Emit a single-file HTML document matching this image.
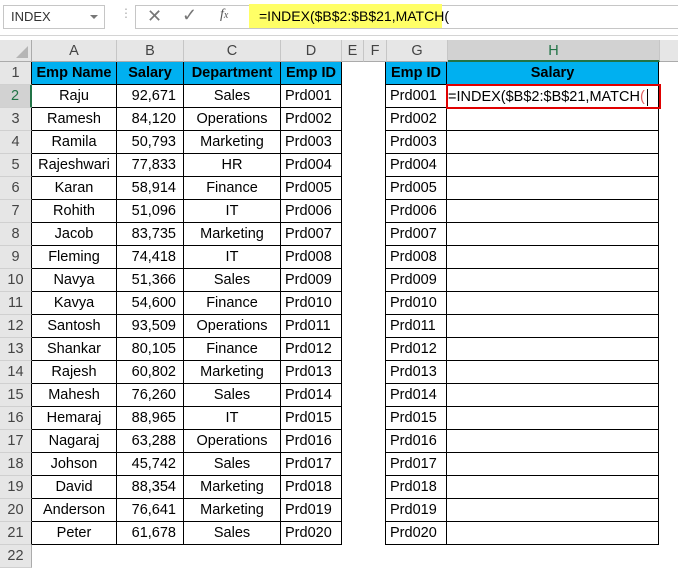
<!DOCTYPE html>
<html><head><meta charset="utf-8"><style>
*{box-sizing:border-box;margin:0;padding:0}
body{width:678px;height:568px;background:#fff;font-family:"Liberation Sans",sans-serif;position:relative;overflow:hidden}
.a{position:absolute}
.row{position:absolute;left:0;height:23px;display:flex;font-size:14.5px;color:#000}
.row>div{height:23px;line-height:23px;white-space:nowrap;overflow:visible}
.rh{width:32px;background:#e6e6e6;color:#444;text-align:center;border-right:1px solid #ababab;border-bottom:1px solid #d0d0d0}
.c{text-align:center}.r{text-align:right;padding-right:7px}.l{text-align:left;padding-left:4px}
.b{border-right:1px solid #000;border-bottom:1px solid #000}
.h{background:#00b0f0;font-weight:bold}
.sp{width:44px;border-right:1px solid #000}
</style></head><body>
<div class="a" style="left:0;top:0;width:678px;height:36px;background:#fff;border-bottom:1px solid #d4d4d4"></div>
<div class="a" style="left:3px;top:5px;width:102px;height:24px;border:1px solid #c6c6c6;font-size:13px;line-height:22px;padding-left:7px;color:#333">INDEX</div>
<div class="a" style="left:90px;top:15px;width:0;height:0;border-left:4px solid transparent;border-right:4px solid transparent;border-top:4px solid #777"></div>
<div class="a" style="left:120px;top:10px;color:#aaa;font-size:12px;line-height:6px">⋮</div>
<div class="a" style="left:135px;top:5px;width:118px;height:24px;border:1px solid #c6c6c6;border-right:none"></div>
<div class="a" style="left:147px;top:6px;color:#777;font-size:18px">✕</div>
<div class="a" style="left:182px;top:5px;color:#777;font-size:18px">✓</div>
<div class="a" style="left:220px;top:7px;color:#555;font-size:14px;font-style:italic;font-family:'Liberation Serif',serif">f<span style="font-size:10px">x</span></div>
<div class="a" style="left:248px;top:5px;width:430px;height:24px;border-top:1px solid #c6c6c6;border-bottom:1px solid #c6c6c6"></div>
<div class="a" style="left:249px;top:4px;width:193px;height:24px;background:#ffff66;font-size:14px;line-height:24px;padding-left:10px;white-space:nowrap">=INDEX($B$2:$B$21,MATCH(</div>
<div class="row" style="top:40px;height:22px;color:#444;font-size:14.5px">
<div style="width:32px;height:22px;background:#e6e6e6;border-right:1px solid #ababab;border-bottom:1px solid #ababab;position:relative"><div class="a" style="right:3px;bottom:3px;border-left:12px solid transparent;border-bottom:12px solid #b5b5b5"></div></div>
<div class="c" style="width:85px;height:22px;line-height:22px;background:#e6e6e6;border-right:1px solid #c6c6c6;border-bottom:1px solid #ababab">A</div>
<div class="c" style="width:67px;height:22px;line-height:22px;background:#e6e6e6;border-right:1px solid #c6c6c6;border-bottom:1px solid #ababab">B</div>
<div class="c" style="width:97px;height:22px;line-height:22px;background:#e6e6e6;border-right:1px solid #c6c6c6;border-bottom:1px solid #ababab">C</div>
<div class="c" style="width:61px;height:22px;line-height:22px;background:#e6e6e6;border-right:1px solid #c6c6c6;border-bottom:1px solid #ababab">D</div>
<div class="c" style="width:22px;height:22px;line-height:22px;background:#e6e6e6;border-right:1px solid #c6c6c6;border-bottom:1px solid #ababab">E</div>
<div class="c" style="width:23px;height:22px;line-height:22px;background:#e6e6e6;border-right:1px solid #c6c6c6;border-bottom:1px solid #ababab">F</div>
<div class="c" style="width:61px;height:22px;line-height:22px;background:#e6e6e6;border-right:1px solid #c6c6c6;border-bottom:1px solid #ababab">G</div>
<div class="c" style="width:212px;height:22px;line-height:22px;background:#d2d2d2;color:#217346;border-right:1px solid #c6c6c6;border-bottom:2px solid #217346">H</div>
<div style="width:18px;height:22px;background:#e6e6e6;border-bottom:1px solid #ababab"></div>
</div>
<div class="row" style="top:62px"><div class="rh" style="border-right-color:#000">1</div><div class="c b h" style="width:85px">Emp Name</div><div class="c b h" style="width:67px">Salary</div><div class="c b h" style="width:97px">Department</div><div class="c b h" style="width:61px">Emp ID</div><div class="sp"></div><div class="c b h" style="width:61px">Emp ID</div><div class="c b h" style="width:212px">Salary</div></div>
<div class="row" style="top:85px"><div class="rh" style="background:#d2d2d2;color:#217346;border-right:2px solid #217346">2</div><div class="c b" style="width:85px">Raju</div><div class="r b" style="width:67px">92,671</div><div class="c b" style="width:97px">Sales</div><div class="l b" style="width:61px">Prd001</div><div class="sp"></div><div class="l b" style="width:61px">Prd001</div><div class="b" style="width:212px"></div></div>
<div class="row" style="top:108px"><div class="rh" style="border-right-color:#000">3</div><div class="c b" style="width:85px">Ramesh</div><div class="r b" style="width:67px">84,120</div><div class="c b" style="width:97px">Operations</div><div class="l b" style="width:61px">Prd002</div><div class="sp"></div><div class="l b" style="width:61px">Prd002</div><div class="b" style="width:212px"></div></div>
<div class="row" style="top:131px"><div class="rh" style="border-right-color:#000">4</div><div class="c b" style="width:85px">Ramila</div><div class="r b" style="width:67px">50,793</div><div class="c b" style="width:97px">Marketing</div><div class="l b" style="width:61px">Prd003</div><div class="sp"></div><div class="l b" style="width:61px">Prd003</div><div class="b" style="width:212px"></div></div>
<div class="row" style="top:154px"><div class="rh" style="border-right-color:#000">5</div><div class="c b" style="width:85px">Rajeshwari</div><div class="r b" style="width:67px">77,833</div><div class="c b" style="width:97px">HR</div><div class="l b" style="width:61px">Prd004</div><div class="sp"></div><div class="l b" style="width:61px">Prd004</div><div class="b" style="width:212px"></div></div>
<div class="row" style="top:177px"><div class="rh" style="border-right-color:#000">6</div><div class="c b" style="width:85px">Karan</div><div class="r b" style="width:67px">58,914</div><div class="c b" style="width:97px">Finance</div><div class="l b" style="width:61px">Prd005</div><div class="sp"></div><div class="l b" style="width:61px">Prd005</div><div class="b" style="width:212px"></div></div>
<div class="row" style="top:200px"><div class="rh" style="border-right-color:#000">7</div><div class="c b" style="width:85px">Rohith</div><div class="r b" style="width:67px">51,096</div><div class="c b" style="width:97px">IT</div><div class="l b" style="width:61px">Prd006</div><div class="sp"></div><div class="l b" style="width:61px">Prd006</div><div class="b" style="width:212px"></div></div>
<div class="row" style="top:223px"><div class="rh" style="border-right-color:#000">8</div><div class="c b" style="width:85px">Jacob</div><div class="r b" style="width:67px">83,735</div><div class="c b" style="width:97px">Marketing</div><div class="l b" style="width:61px">Prd007</div><div class="sp"></div><div class="l b" style="width:61px">Prd007</div><div class="b" style="width:212px"></div></div>
<div class="row" style="top:246px"><div class="rh" style="border-right-color:#000">9</div><div class="c b" style="width:85px">Fleming</div><div class="r b" style="width:67px">74,418</div><div class="c b" style="width:97px">IT</div><div class="l b" style="width:61px">Prd008</div><div class="sp"></div><div class="l b" style="width:61px">Prd008</div><div class="b" style="width:212px"></div></div>
<div class="row" style="top:269px"><div class="rh" style="border-right-color:#000">10</div><div class="c b" style="width:85px">Navya</div><div class="r b" style="width:67px">51,366</div><div class="c b" style="width:97px">Sales</div><div class="l b" style="width:61px">Prd009</div><div class="sp"></div><div class="l b" style="width:61px">Prd009</div><div class="b" style="width:212px"></div></div>
<div class="row" style="top:292px"><div class="rh" style="border-right-color:#000">11</div><div class="c b" style="width:85px">Kavya</div><div class="r b" style="width:67px">54,600</div><div class="c b" style="width:97px">Finance</div><div class="l b" style="width:61px">Prd010</div><div class="sp"></div><div class="l b" style="width:61px">Prd010</div><div class="b" style="width:212px"></div></div>
<div class="row" style="top:315px"><div class="rh" style="border-right-color:#000">12</div><div class="c b" style="width:85px">Santosh</div><div class="r b" style="width:67px">93,509</div><div class="c b" style="width:97px">Operations</div><div class="l b" style="width:61px">Prd011</div><div class="sp"></div><div class="l b" style="width:61px">Prd011</div><div class="b" style="width:212px"></div></div>
<div class="row" style="top:338px"><div class="rh" style="border-right-color:#000">13</div><div class="c b" style="width:85px">Shankar</div><div class="r b" style="width:67px">80,105</div><div class="c b" style="width:97px">Finance</div><div class="l b" style="width:61px">Prd012</div><div class="sp"></div><div class="l b" style="width:61px">Prd012</div><div class="b" style="width:212px"></div></div>
<div class="row" style="top:361px"><div class="rh" style="border-right-color:#000">14</div><div class="c b" style="width:85px">Rajesh</div><div class="r b" style="width:67px">60,802</div><div class="c b" style="width:97px">Marketing</div><div class="l b" style="width:61px">Prd013</div><div class="sp"></div><div class="l b" style="width:61px">Prd013</div><div class="b" style="width:212px"></div></div>
<div class="row" style="top:384px"><div class="rh" style="border-right-color:#000">15</div><div class="c b" style="width:85px">Mahesh</div><div class="r b" style="width:67px">76,260</div><div class="c b" style="width:97px">Sales</div><div class="l b" style="width:61px">Prd014</div><div class="sp"></div><div class="l b" style="width:61px">Prd014</div><div class="b" style="width:212px"></div></div>
<div class="row" style="top:407px"><div class="rh" style="border-right-color:#000">16</div><div class="c b" style="width:85px">Hemaraj</div><div class="r b" style="width:67px">88,965</div><div class="c b" style="width:97px">IT</div><div class="l b" style="width:61px">Prd015</div><div class="sp"></div><div class="l b" style="width:61px">Prd015</div><div class="b" style="width:212px"></div></div>
<div class="row" style="top:430px"><div class="rh" style="border-right-color:#000">17</div><div class="c b" style="width:85px">Nagaraj</div><div class="r b" style="width:67px">63,288</div><div class="c b" style="width:97px">Operations</div><div class="l b" style="width:61px">Prd016</div><div class="sp"></div><div class="l b" style="width:61px">Prd016</div><div class="b" style="width:212px"></div></div>
<div class="row" style="top:453px"><div class="rh" style="border-right-color:#000">18</div><div class="c b" style="width:85px">Johson</div><div class="r b" style="width:67px">45,742</div><div class="c b" style="width:97px">Sales</div><div class="l b" style="width:61px">Prd017</div><div class="sp"></div><div class="l b" style="width:61px">Prd017</div><div class="b" style="width:212px"></div></div>
<div class="row" style="top:476px"><div class="rh" style="border-right-color:#000">19</div><div class="c b" style="width:85px">David</div><div class="r b" style="width:67px">88,354</div><div class="c b" style="width:97px">Marketing</div><div class="l b" style="width:61px">Prd018</div><div class="sp"></div><div class="l b" style="width:61px">Prd018</div><div class="b" style="width:212px"></div></div>
<div class="row" style="top:499px"><div class="rh" style="border-right-color:#000">20</div><div class="c b" style="width:85px">Anderson</div><div class="r b" style="width:67px">76,641</div><div class="c b" style="width:97px">Marketing</div><div class="l b" style="width:61px">Prd019</div><div class="sp"></div><div class="l b" style="width:61px">Prd019</div><div class="b" style="width:212px"></div></div>
<div class="row" style="top:522px"><div class="rh" style="border-right-color:#000">21</div><div class="c b" style="width:85px">Peter</div><div class="r b" style="width:67px">61,678</div><div class="c b" style="width:97px">Sales</div><div class="l b" style="width:61px">Prd020</div><div class="sp"></div><div class="l b" style="width:61px">Prd020</div><div class="b" style="width:212px"></div></div>
<div class="row" style="top:545px"><div class="rh">22</div></div>
<div class="a" style="left:446px;top:84px;width:215px;height:25px;border:2px solid #e00000"></div>
<div class="a" style="left:448px;top:86px;height:22px;line-height:22px;font-size:14.5px;white-space:nowrap">=INDEX($B$2:$B$21,MATCH<span style="color:#e06060">(</span><span style="display:inline-block;width:1px;height:17px;background:#000;vertical-align:middle;margin-left:2px"></span></div>
</body></html>
